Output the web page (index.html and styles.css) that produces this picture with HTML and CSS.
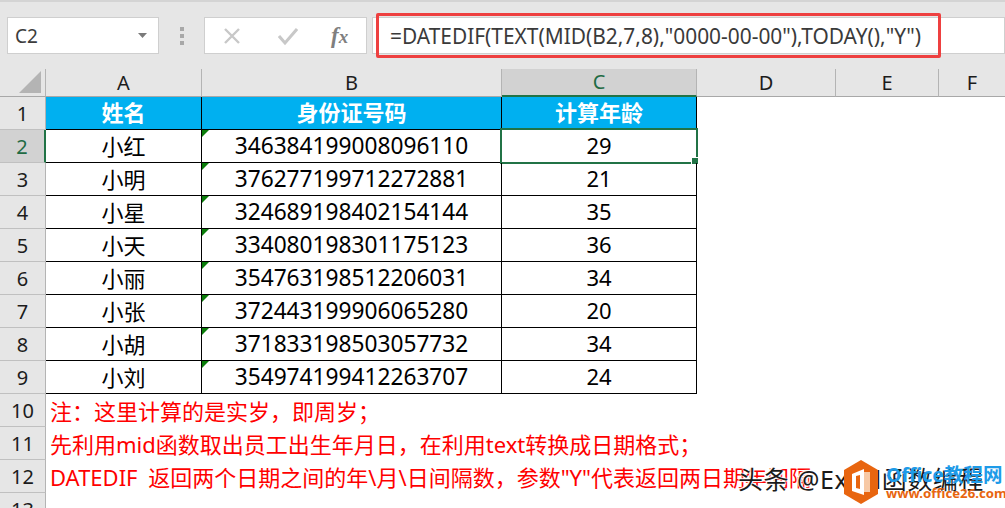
FILE: index.html
```html
<!DOCTYPE html>
<html lang="zh">
<head>
<meta charset="utf-8">
<title>DATEDIF</title>
<link rel="stylesheet" href="styles.css">
</head>
<body>
<div class="app">
  <div class="formula-bar">
    <div class="name-box"><span>C2</span><svg class="caret" width="9" height="5" viewBox="0 0 9 5"><path d="M0 0h9L4.500 5z" fill="#7a7a7a"/></svg></div>
    <div class="grip"><i></i><i></i><i></i></div>
    <div class="fx-buttons">
      <svg width="20" height="20" viewBox="0 0 20 20"><path d="M3 3l14 14M17 3L3 17" stroke="#c8c8c8" stroke-width="2.400" fill="none"/></svg>
      <svg width="20" height="20" viewBox="0 0 20 20"><path d="M1 10l6 7L19 3" stroke="#c8c8c8" stroke-width="3" fill="none"/></svg>
      <span class="fx">f<span class="fx-x">x</span></span>
    </div>
    <div class="formula-input"><span>=DATEDIF(TEXT(MID(B2,7,8),"0000-00-00"),TODAY(),"Y")</span></div>
  </div>
  <div class="sheet">
    <div class="row col-heads">
      <div class="corner"><svg width="24" height="24" viewBox="0 0 24 24"><path d="M23 1v22H1z" fill="#b4b4b4"/></svg></div>
      <div class="ch w-a">A</div><div class="ch w-b">B</div><div class="ch w-c active">C</div><div class="ch w-d">D</div><div class="ch w-e">E</div><div class="ch w-f">F</div>
    </div>
    <div class="row"><div class="rh">1</div><div class="c w-a head">姓名</div><div class="c w-b head">身份证号码</div><div class="c w-c head">计算年龄</div></div>
    <div class="row"><div class="rh active">2</div><div class="c w-a">小红</div><div class="c w-b tri">346384199008096110</div><div class="c w-c">29<b class="sel"></b></div></div>
    <div class="row"><div class="rh">3</div><div class="c w-a">小明</div><div class="c w-b tri">376277199712272881</div><div class="c w-c">21</div></div>
    <div class="row"><div class="rh">4</div><div class="c w-a">小星</div><div class="c w-b tri">324689198402154144</div><div class="c w-c">35</div></div>
    <div class="row"><div class="rh">5</div><div class="c w-a">小天</div><div class="c w-b tri">334080198301175123</div><div class="c w-c">36</div></div>
    <div class="row"><div class="rh">6</div><div class="c w-a">小丽</div><div class="c w-b tri">354763198512206031</div><div class="c w-c">34</div></div>
    <div class="row"><div class="rh">7</div><div class="c w-a">小张</div><div class="c w-b tri">372443199906065280</div><div class="c w-c">20</div></div>
    <div class="row"><div class="rh">8</div><div class="c w-a">小胡</div><div class="c w-b tri">371833198503057732</div><div class="c w-c">34</div></div>
    <div class="row"><div class="rh">9</div><div class="c w-a">小刘</div><div class="c w-b tri">354974199412263707</div><div class="c w-c">24</div></div>
    <div class="row"><div class="rh">10</div><div class="note">注：这里计算的是实岁，即周岁；</div></div>
    <div class="row"><div class="rh">11</div><div class="note">先利用mid函数取出员工出生年月日，在利用text转换成日期格式；</div></div>
    <div class="row"><div class="rh">12</div><div class="note">DATEDIF 返回两个日期之间的年\月\日间隔数，参数"Y"代表返回两日期年间隔</div></div>
    <div class="row"><div class="rh">13</div></div>
  </div>
  <div class="watermark">
    <span class="wm-text">头条 @Excel函数编程</span>
    <svg class="wm-logo" width="36" height="44" viewBox="0 0 36 44"><path d="M18 0l17 10v24L18 44 1 34V10z" fill="#e8650f"/><path d="M21 9v26l-12-4V14z" fill="#fff"/><path d="M21 12h6v20h-6z" fill="#f7c9a5"/><path d="M13 16l4-1v14l-4-1z" fill="#e8650f"/></svg>
    <span class="wm-site"><span class="wm-office">Office教程网</span><span class="wm-url">www.office26.com</span></span>
  </div>
</div>
</body>
</html>
```
FILE: styles.css
```css
* { box-sizing: border-box; }
html, body { margin: 0; padding: 0; }
body { width: 1005px; height: 508px; overflow: hidden; background: #fff; font-family: "Noto Sans", "Noto Sans CJK SC", sans-serif; color: #111; }
.app { position: relative; width: 1005px; height: 508px; overflow: hidden; }

.formula-bar { height: 69px; background: #e6e6e6; border-top: 2px solid #d4d4d4; padding-top: 15px; display: flex; align-items: flex-start; }
.name-box { width: 152px; height: 37px; margin-left: 7px; background: #fff; border: 1px solid #cfcfcf; display: flex; align-items: center; justify-content: space-between; padding: 0 11px 0 7px; font-size: 19px; color: #3c3c3c; }
.grip { width: 45px; height: 37px; display: flex; flex-direction: column; justify-content: center; align-items: center; gap: 3px; }
.grip i { width: 4px; height: 4px; background: #a8a8a8; display: block; }
.fx-buttons { width: 163px; height: 37px; background: #fff; border: 1px solid #cfcfcf; display: flex; align-items: center; gap: 36px; padding-left: 17px; }
.fx { font-family: "Liberation Serif", serif; font-style: italic; font-weight: 700; font-size: 23px; color: #7f7f7f; margin-left: -3px; }
.fx-x { font-size: 19px; }
.formula-input { flex: 1; height: 37px; margin-left: 5px; background: #fff; border: 1px solid #cfcfcf; position: relative; display: flex; align-items: center; padding-left: 17px; font-size: 20.900px; color: #3a3a3a; white-space: nowrap; }
.formula-input::after { content: ""; position: absolute; left: 3px; top: -5px; width: 559px; height: 39px; border: 3px solid #ee4040; border-radius: 2px; }

.sheet { display: flex; flex-direction: column; }
.row { display: flex; height: 33px; flex: none; }
.col-heads { height: 28px; background: #e6e6e6; }
.corner { width: 46px; display: flex; align-items: flex-end; justify-content: flex-end; padding: 0 3px 2px 0; border-right: 1px solid #b4b4b4; border-bottom: 1px solid #a8a8a8; }
.ch { height: 28px; display: flex; align-items: flex-end; justify-content: center; padding-bottom: 1px; line-height: 24px; font-size: 20px; border-right: 1px solid #b4b4b4; border-bottom: 1px solid #a8a8a8; color: #1c1c1c; }
.ch.active { background: #d2d2d2; color: #1f6b44; border-bottom: 2px solid #217346; }
.w-a { width: 156px; }
.w-b { width: 300px; }
.w-c { width: 195px; }
.w-d { width: 139px; }
.w-e { width: 103px; }
.w-f { width: 66px; border-right: 0; }

.rh { width: 46px; flex: none; background: #e6e6e6; border-right: 1px solid #b4b4b4; border-bottom: 1px solid #c0c0c0; display: flex; align-items: center; justify-content: center; font-size: 20px; color: #1c1c1c; }
.rh.active { background: #d2d2d2; color: #1f6b44; border-right: 2px solid #217346; }
.c { flex: none; position: relative; display: flex; align-items: center; justify-content: center; padding-bottom: 3px; border-right: 1px solid #000; border-bottom: 1px solid #000; font-size: 22px; color: #000; white-space: nowrap; }
.w-b.tri { font-size: 22.700px; padding-bottom: 1px; }
.c.head { background: #00b0f0; color: #fff; font-weight: 700; font-size: 22px; padding-bottom: 5px; }
.tri::before { content: ""; position: absolute; left: 0; top: 0; border-style: solid; border-width: 7px 7px 0 0; border-color: #0a7d0a transparent transparent transparent; }
.sel { position: absolute; left: -2px; top: -2px; right: -2px; bottom: -2px; border: 2px solid #217346; }
.sel::after { content: ""; position: absolute; right: -3px; bottom: -3px; width: 6px; height: 6px; background: #217346; border: 1px solid #fff; }
.note { padding: 0 0 2px 4px; color: #f00; font-size: 22px; word-spacing: 5px; display: flex; align-items: center; white-space: nowrap; }

.watermark { position: absolute; left: 736px; top: 453px; width: 269px; height: 55px; }
.wm-text { position: absolute; left: 2px; top: 8px; font-size: 25px; line-height: 36px; letter-spacing: 0.500px; word-spacing: 1px; color: #1a1a1a; white-space: nowrap; text-shadow: 0 0 2px #fff, 1px 1px 1px #fff, -1px -1px 1px #fff; }
.wm-logo { position: absolute; left: 107px; top: 7px; }
.wm-site { position: absolute; left: 150px; top: 10px; display: flex; flex-direction: column; white-space: nowrap; }
.wm-office { font-size: 19.500px; line-height: 24px; font-weight: 700; color: #1e9be8; }
.wm-url { font-size: 13.200px; line-height: 13px; font-weight: 700; color: #e8650f; }
```
